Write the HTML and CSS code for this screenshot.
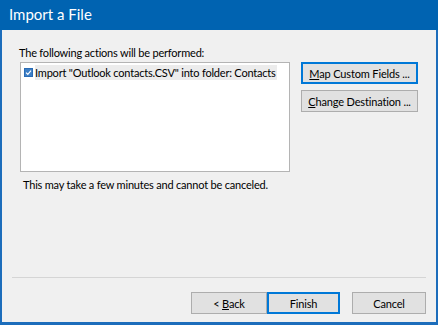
FILE: index.html
```html
<!DOCTYPE html>
<html lang="en">
<head>
<meta charset="UTF-8">
<title>Import a File</title>
<link rel="stylesheet" href="styles.css">
</head>
<body>
<div class="window">
<div class="title-bar">Import a File</div>
<div class="content">
<p class="label">The following actions will be performed:</p>
<div class="main-row">
<div class="action-list">
<div class="action-item">
<svg class="chk" width="9" height="9" viewBox="0 0 9 9">
<rect x="0.5" y="0.5" width="8" height="8" fill="#3d7fc6" stroke="#2a6cb5"/>
<path d="M2 4.6 L3.8 6.3 L7 2.6" fill="none" stroke="#fff" stroke-width="1.2"/>
</svg>
<span class="item-text">Import "Outlook contacts.CSV" into folder: Contacts</span>
</div>
</div>
<div class="side-buttons">
<button type="button" class="btn focused"><u>M</u>ap Custom Fields ...</button>
<button type="button" class="btn"><u>C</u>hange Destination ...</button>
</div>
</div>
<p class="note">This may take a few minutes and cannot be canceled.</p>
<div class="separator"></div>
<div class="btn-area">
<button type="button" class="btn btn-back">&lt; <u>B</u>ack</button>
<button type="button" class="btn btn-finish focused">Finish</button>
<button type="button" class="btn btn-cancel">Cancel</button>
</div>
</div>
</div>
</body>
</html>
```
FILE: styles.css
```css
html, body { margin: 0; padding: 0; }
body { font-family: Lato, 'Noto Sans', sans-serif; font-size: 11px; letter-spacing: -0.2px; color: #000; }
.window { width: 438px; height: 325px; box-sizing: border-box; background: #f0f0f0; border: solid #1c6dbb; border-width: 0 2px 3px 2px; display: flex; flex-direction: column; }
.title-bar { height: 30px; line-height: 29px; margin: 0 -2px; padding-left: 9px; background: #0063b1; color: #fff; font-size: 15px; letter-spacing: 0; }
.content { flex: 1; display: flex; flex-direction: column; }
.label { margin: 15px 0 0 17px; line-height: 16px; }
.main-row { display: flex; gap: 11px; margin: 1px 0 0 18px; }
.action-list { width: 270px; height: 110px; flex-shrink: 0; box-sizing: border-box; background: #fff; border: 1px solid #b4b4b4; padding: 1px; overflow: hidden; }
.action-item { display: flex; align-items: center; height: 15px; margin-top: 1px; }
.chk { margin: 0 2px 0 2px; flex-shrink: 0; }
.item-text { background: #ececec; height: 15px; line-height: 15px; padding: 0 1px 0 0; white-space: nowrap; }
.side-buttons { display: flex; flex-direction: column; gap: 6px; }
.btn { font-family: inherit; font-size: 11px; letter-spacing: -0.15px; color: #000; background: #e1e1e1; border: 1px solid #adadad; height: 22px; padding: 0; box-sizing: border-box; white-space: nowrap; }
.btn u { text-decoration: underline; }
.side-buttons .btn { width: 117px; }
.btn.focused { border-color: #0078d7; box-shadow: inset 0 0 0 1px #0078d7; }
.note { margin: 5px 0 0 21px; line-height: 16px; }
.separator { margin: 84px 10px 0 10px; height: 1px; background: #d5d5d5; }
.btn-area { display: flex; margin: 14px 0 0 189px; }
.btn-back { width: 76px; }
.btn-finish { width: 73px; }
.btn-cancel { width: 74px; margin-left: 12px; }
```
